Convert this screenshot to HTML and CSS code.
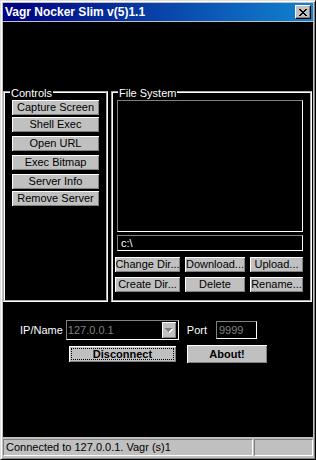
FILE: index.html
```html
<!DOCTYPE html>
<html lang="en">
<head>
    <meta charset="UTF-8">
    <meta name="viewport" content="width=device-width, initial-scale=1.0">
    <title>Vagr Nocker Slim</title>
    <link rel="stylesheet" href="styles.css">
</head>
<body>
    <div class="window">
        <div class="titlebar">
            <span class="title">Vagr Nocker Slim v(5)1.1</span>
            <button class="close-btn" title="Close">
                <svg width="8" height="7" viewBox="0 0 8 7">
                    <path d="M0 0h2v1h-2zM6 0h2v1h-2zM1 1h2v1h-2zM5 1h2v1h-2zM2 2h4v1h-4zM3 3h2v1h-2zM2 4h4v1h-4zM1 5h2v1h-2zM5 5h2v1h-2zM0 6h2v1h-2zM6 6h2v1h-2z" fill="#000"/>
                </svg>
            </button>
        </div>

        <div class="client">
            <div class="groups">
                <div class="group controls">
                    <div class="group-title">Controls</div>
                    <div class="btn-list">
                        <button class="btn">Capture Screen</button>
                        <button class="btn">Shell Exec</button>
                        <button class="btn spaced">Open URL</button>
                        <button class="btn spaced">Exec Bitmap</button>
                        <button class="btn spaced">Server Info</button>
                        <button class="btn">Remove Server</button>
                    </div>
                </div>

                <div class="group files">
                    <div class="group-title">File System</div>
                    <div class="file-list"></div>
                    <div class="path-box">c:\</div>
                    <div class="file-buttons">
                        <button class="btn">Change Dir...</button>
                        <button class="btn">Download...</button>
                        <button class="btn">Upload...</button>
                        <button class="btn">Create Dir...</button>
                        <button class="btn">Delete</button>
                        <button class="btn">Rename...</button>
                    </div>
                </div>
            </div>

            <div class="connect-row">
                <span class="label">IP/Name</span>
                <div class="combo">
                    <span class="combo-text">127.0.0.1</span>
                    <span class="combo-arrow">
                        <svg width="8" height="5" viewBox="0 0 8 5">
                            <path d="M1 1h7v1h-1v1h-1v1h-1v1h-1v-1h-1v-1h-1v-1h-1z" fill="#fff"/>
                            <path d="M0 0h7v1h-1v1h-1v1h-1v1h-1v-1h-1v-1h-1v-1h-1z" fill="#808080"/>
                        </svg>
                    </span>
                </div>
                <span class="label port-label">Port</span>
                <div class="port-box">9999</div>
            </div>

            <div class="action-row">
                <button class="btn bold default"><span class="focus">Disconnect</span></button>
                <button class="btn bold about">About!</button>
            </div>
        </div>

        <div class="statusbar">
            <div class="panel main">Connected to 127.0.0.1. Vagr (s)1</div>
            <div class="panel side"></div>
        </div>
    </div>
</body>
</html>
```

FILE: styles.css
```css
body {
    margin: 0;
    font-family: "Liberation Sans", Arial, sans-serif;
    font-size: 11px;
}
.window {
    width: 316px;
    height: 460px;
    box-sizing: border-box;
    border: 1px solid;
    border-color: #dfdfdf #000 #000 #dfdfdf;
    box-shadow: inset 1px 1px #fff, inset -1px -1px #808080;
    padding: 2px;
    background-color: #c0c0c0;
    display: flex;
    flex-direction: column;
}
.titlebar {
    height: 18px;
    display: flex;
    align-items: center;
    justify-content: space-between;
    padding: 0 2px 0 2px;
    background: linear-gradient(to right, #000080, #1084d0);
}
.title {
    color: #fff;
    font-weight: bold;
    font-size: 12px;
}
.close-btn {
    width: 16px;
    height: 14px;
    padding: 0;
    border: 1px solid;
    border-color: #fff #000 #000 #fff;
    box-shadow: inset -1px -1px #808080;
    background-color: #c0c0c0;
    display: flex;
    align-items: center;
    justify-content: center;
}
.client {
    height: 415px;
    margin-top: 1px;
    background-color: #000;
    color: #fff;
    padding-top: 69px;
    box-sizing: border-box;
}
.groups {
    display: flex;
    gap: 3px;
}
.group {
    height: 211px;
    box-sizing: border-box;
    border: 2px groove #fff;
}
.controls {
    width: 105px;
}
.files {
    width: 201px;
}
.group-title {
    width: fit-content;
    height: 13px;
    line-height: 13px;
    margin: -6px 0 0 5px;
    padding: 0 1px;
    background-color: #000;
}
.btn {
    display: block;
    height: 15px;
    padding: 0;
    border: none;
    background-color: #c0c0c0;
    box-shadow: inset 1px 1px #fff, inset -1px -1px #808080;
    font-family: "Liberation Sans", Arial, sans-serif;
    font-size: 11px;
    line-height: 13px;
    color: #000;
    white-space: nowrap;
}
.btn-list {
    display: flex;
    flex-direction: column;
    gap: 2px;
    margin-left: 7px;
}
.btn-list .btn {
    width: 87px;
}
.btn-list .spaced {
    margin-top: 2px;
}
.file-list {
    width: 186px;
    height: 132px;
    margin-left: 4px;
    box-sizing: border-box;
    border: 1px solid;
    border-color: #808080 #fff #fff #808080;
}
.path-box {
    width: 186px;
    height: 16px;
    margin: 3px 0 0 4px;
    box-sizing: border-box;
    border: 1px solid;
    border-color: #808080 #fff #fff #808080;
    padding-left: 3px;
    line-height: 14px;
}
.file-buttons {
    display: grid;
    grid-template-columns: 65px 60px 53px;
    column-gap: 5px;
    row-gap: 5px;
    width: 188px;
    margin: 6px 0 0 2px;
}
.file-buttons .btn {
    width: 100%;
}
.connect-row {
    display: flex;
    align-items: center;
    margin-top: 18px;
    padding-left: 17px;
    height: 20px;
}
.label {
    margin-right: 3px;
}
.combo {
    width: 113px;
    height: 20px;
    box-sizing: border-box;
    border: 1px solid;
    border-color: #808080 #fff #fff #808080;
    display: flex;
    align-items: center;
    justify-content: space-between;
    padding: 1px 2px 1px 1px;
}
.combo-text {
    color: #808080;
}
.combo-arrow {
    width: 14px;
    height: 16px;
    box-sizing: border-box;
    background-color: #c0c0c0;
    box-shadow: inset 1px 1px #fff, inset -1px -1px #808080;
    display: flex;
    align-items: center;
    justify-content: center;
}
.port-label {
    margin: 0 9px 0 8px;
}
.port-box {
    width: 41px;
    height: 18px;
    box-sizing: border-box;
    border: 1px solid;
    border-color: #808080 #fff #fff #808080;
    color: #808080;
    padding-left: 2px;
    line-height: 16px;
}
.action-row {
    display: flex;
    gap: 10px;
    margin-top: 5px;
    padding-left: 65px;
}
.bold {
    font-weight: bold;
    height: 18px;
    line-height: 16px;
}
.default {
    width: 109px;
    border: 1px solid #000;
    box-shadow: inset 1px 1px #fff, inset -1px -1px #808080;
    padding: 2px;
}
.focus {
    display: block;
    height: 100%;
    box-sizing: border-box;
    border: 1px dotted #000;
    line-height: 10px;
}
.about {
    width: 80px;
}
.statusbar {
    height: 19px;
    margin-top: 1px;
    display: flex;
    gap: 1px;
    padding: 1px 0;
    box-sizing: border-box;
}
.panel {
    box-sizing: border-box;
    border: 1px solid;
    border-color: #808080 #fff #fff #808080;
    line-height: 15px;
    padding-left: 2px;
    color: #000;
}
.main {
    width: 250px;
}
.side {
    flex: 1;
}
```
